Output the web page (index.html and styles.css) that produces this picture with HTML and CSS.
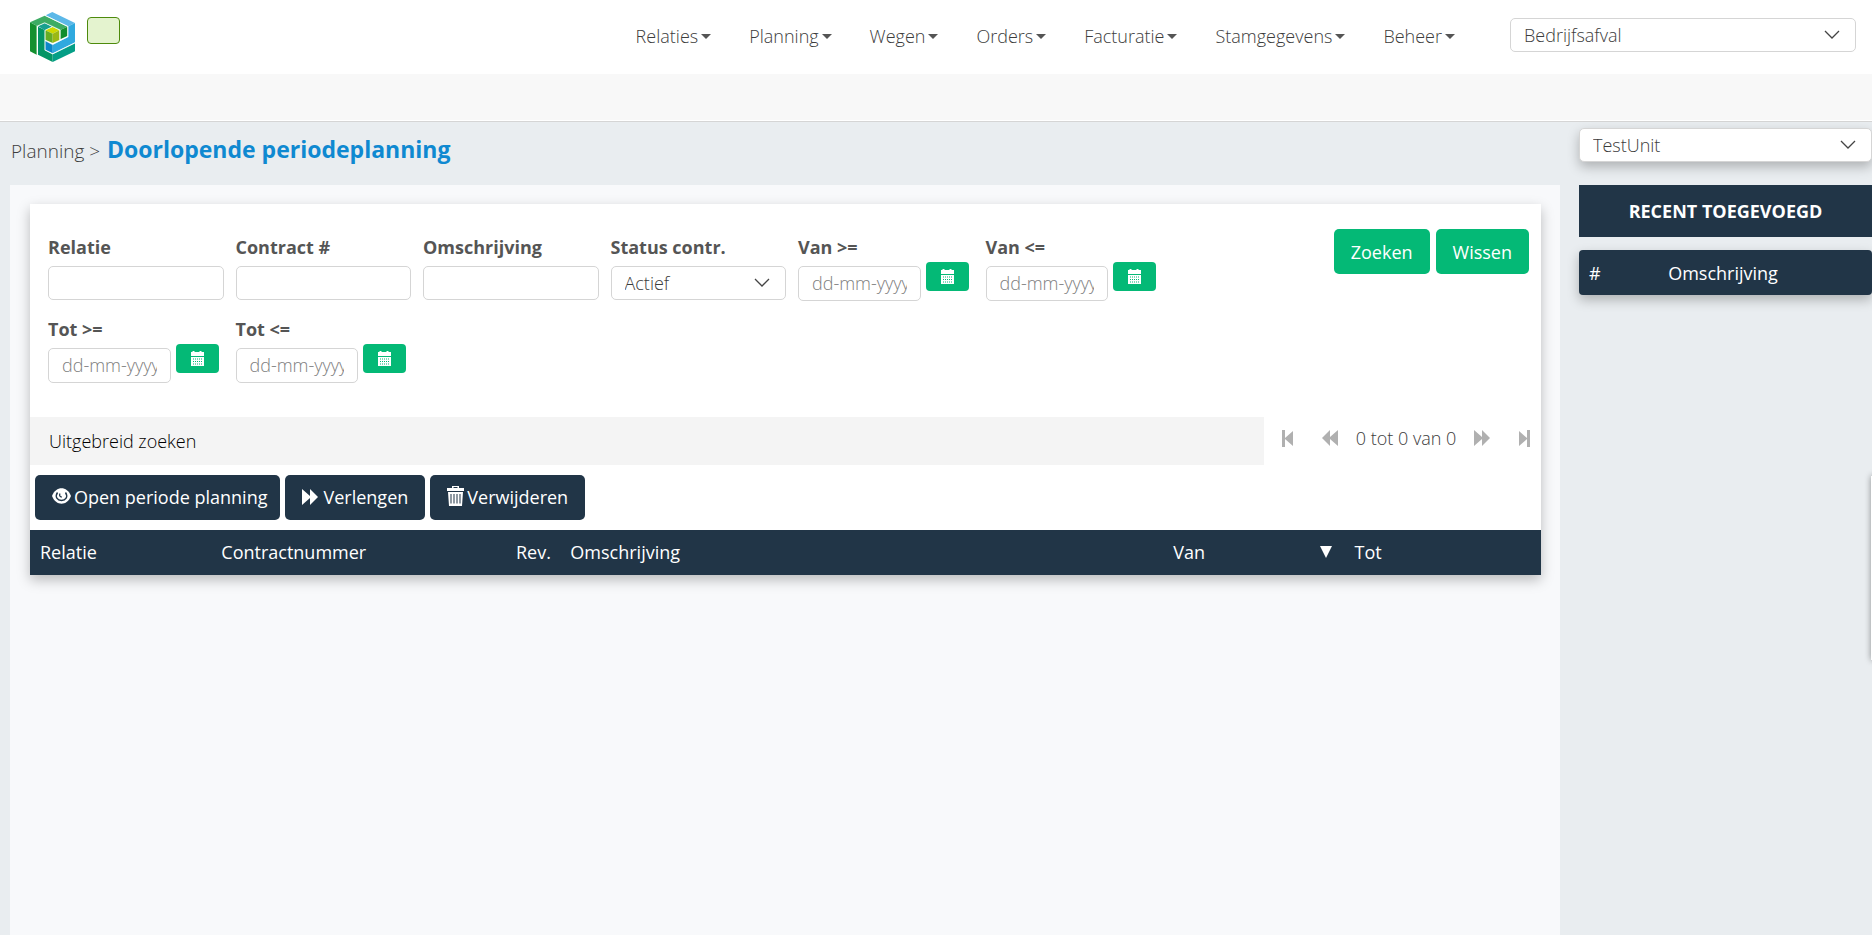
FILE: index.html
```html
<!DOCTYPE html>
<html lang="nl">
<head>
<meta charset="utf-8">
<title>Doorlopende periodeplanning</title>
<link rel="stylesheet" href="styles.css">
</head>
<body>
<svg class="sprite" aria-hidden="true">
  <symbol id="calendar" viewBox="0 0 13 15"><path fill="currentColor" fill-rule="evenodd" d="M0 1h1.500V0h2v1h5V0h2v1H13v4H0zM0 6h13v9H0zM2 7.500v1h1v-1zm2 0v1h1v-1zm2 0v1h1v-1zm2 0v1h1v-1zm2 0v1h1v-1zM2 10v1h1v-1zm2 0v1h1v-1zm2 0v1h1v-1zm2 0v1h1v-1zm2 0v1h1v-1zM2 12.500v1h1v-1zm2 0v1h1v-1zm2 0v1h1v-1zm2 0v1h1v-1zm2 0v1h1v-1z"/></symbol>
  <symbol id="forward" viewBox="0 0 16 16"><path fill="currentColor" d="M0 0l8 7V0l8 8-8 8V9l-8 7z"/></symbol>
  <symbol id="step" viewBox="0 0 11 17"><path fill="currentColor" d="M0 1l8 7V0h3v17H8V9l-8 7z"/></symbol>
</svg>
<header class="topbar">
  <a class="logo" href="#" aria-label="Home">
    <svg width="45" height="50" viewBox="90 36 135 150">
      <path fill="#14902f" d="M90 67l20 10v87l-20-10z"/>
      <path fill="#3dac64" d="M90 67l44-20 68 33-21 10-47-22-23 10z"/>
      <path fill="#118d2c" d="M181 90l21-10v28l-21 10z"/>
      <path fill="#5cb8e8" d="M137 46l20-10 68 33-20 10z"/>
      <path fill="#2fa9df" d="M205 79l20-10v58l-67 33v-26l47-23z"/>
      <path fill="#0d87c9" d="M136 122l22 12v26l-22-11z"/>
      <path fill="#049565" d="M114 80l20 10v61l24 12v23l-44-22z"/>
      <path fill="#18a08f" d="M114 79l20-9 22 10-22 11z"/>
      <path fill="#049e86" d="M158 163l67-33v24l-67 32z"/>
      <path fill="#ccd800" d="M136 91l22-10 20 10-20 10z"/>
      <path fill="#66ad24" d="M136 91l22 10v28l-22-10z"/>
      <path fill="#9bb814" d="M158 101l20-10v29l-20 9z"/>
      <path fill="none" stroke="#fff" stroke-opacity=".75" stroke-width="2" d="M112 164V78l22-10 47 22v28M135 46l68 33v31l-45 24-23-12M135 150V91l22-11M135 150l23 12 67-33"/>
    </svg>
  </a>
  <span class="status"></span>
  <nav class="menu">
    <button type="button">Relaties</button>
    <button type="button">Planning</button>
    <button type="button">Wegen</button>
    <button type="button">Orders</button>
    <button type="button">Facturatie</button>
    <button type="button">Stamgegevens</button>
    <button type="button">Beheer</button>
  </nav>
  <div class="select company">
    <select class="control" aria-label="Bedrijf"><option>Bedrijfsafval</option></select>
    <svg class="chevron" width="16" height="9" viewBox="0 0 16 9"><path d="M1 1l7 7 7-7"/></svg>
  </div>
</header>
<div class="subbar"></div>
<div class="page">
  <main class="content">
    <div class="crumbs"><a href="#">Planning</a> &gt; <h1>Doorlopende periodeplanning</h1></div>
    <div class="panel">
      <section class="card">
        <form class="search">
          <div class="fields">
            <div class="field"><label for="relatie">Relatie</label><input class="control" id="relatie" type="text"></div>
            <div class="field"><label for="contract">Contract #</label><input class="control" id="contract" type="text"></div>
            <div class="field"><label for="omschrijving">Omschrijving</label><input class="control" id="omschrijving" type="text"></div>
            <div class="field"><label for="status">Status contr.</label>
              <div class="select"><select class="control" id="status"><option>Actief</option></select><svg class="chevron" width="16" height="9" viewBox="0 0 16 9"><path d="M1 1l7 7 7-7"/></svg></div></div>
            <div class="field"><label for="van1">Van &gt;=</label><div class="date"><input class="control" id="van1" type="text" placeholder="dd-mm-yyyy"><button type="button" class="pick" aria-label="Kies datum"><svg width="13" height="15"><use href="#calendar"/></svg></button></div></div>
            <div class="field"><label for="van2">Van &lt;=</label><div class="date"><input class="control" id="van2" type="text" placeholder="dd-mm-yyyy"><button type="button" class="pick" aria-label="Kies datum"><svg width="13" height="15"><use href="#calendar"/></svg></button></div></div>
            <div class="field"><label for="tot1">Tot &gt;=</label><div class="date"><input class="control" id="tot1" type="text" placeholder="dd-mm-yyyy"><button type="button" class="pick" aria-label="Kies datum"><svg width="13" height="15"><use href="#calendar"/></svg></button></div></div>
            <div class="field"><label for="tot2">Tot &lt;=</label><div class="date"><input class="control" id="tot2" type="text" placeholder="dd-mm-yyyy"><button type="button" class="pick" aria-label="Kies datum"><svg width="13" height="15"><use href="#calendar"/></svg></button></div></div>
          </div>
          <div class="submit">
            <button type="button" class="btn green">Zoeken</button>
            <button type="button" class="btn green">Wissen</button>
          </div>
        </form>
        <div class="extra">
          <button type="button" class="extended">Uitgebreid zoeken</button>
          <div class="pager">
            <button type="button" class="outer" aria-label="Eerste"><svg class="flip" width="11" height="17"><use href="#step"/></svg></button>
            <button type="button" aria-label="Vorige"><svg class="flip" width="16" height="16"><use href="#forward"/></svg></button>
            <span>0 tot 0 van 0</span>
            <button type="button" aria-label="Volgende"><svg width="16" height="16"><use href="#forward"/></svg></button>
            <button type="button" class="outer" aria-label="Laatste"><svg width="11" height="17"><use href="#step"/></svg></button>
          </div>
        </div>
        <div class="actions">
          <button type="button" class="btn dark open"><svg width="19" height="16" viewBox="0 0 19 16"><path fill="currentColor" d="M0 8C4-2.300 15-2.300 19 8 15 18.300 4 18.300 0 8z"/><path fill="none" stroke="#213547" stroke-width="1.400" d="M5.500 4.500C2.500 9 5.500 12.500 9.500 12.500s7-3.500 4-8"/><path fill="none" stroke="#213547" stroke-width="1.300" d="M8 5.500c-1 2 0 3.500 1.800 3.500"/></svg>Open periode planning</button>
          <button type="button" class="btn dark"><svg class="wide" width="16" height="16"><use href="#forward"/></svg>Verlengen</button>
          <button type="button" class="btn dark"><svg width="17" height="20" viewBox="0 0 17 20"><path fill="currentColor" fill-rule="evenodd" d="M5 2V0h7v2h5v3H0V2zm1.500 0h4V1h-4zM1 6h15l-1 14H2zM3.500 8v9.500h1V8zm3 0v9.500h1V8zm3 0v9.500h1V8zm3 0v9.500h1V8z"/></svg>Verwijderen</button>
        </div>
        <table class="results">
          <colgroup><col class="c-rel"><col class="c-con"><col class="c-rev"><col class="c-oms"><col class="c-van"><col class="c-tot"></colgroup>
          <thead><tr><th>Relatie</th><th>Contractnummer</th><th>Rev.</th><th>Omschrijving</th><th><div class="sorted">Van<svg width="12" height="12" viewBox="0 0 12 12"><path fill="currentColor" d="M0 0h12L6 12z"/></svg></div></th><th>Tot</th></tr></thead>
        </table>
      </section>
    </div>
  </main>
  <aside class="side">
    <div class="select unit">
      <select class="control" aria-label="Unit"><option>TestUnit</option></select>
      <svg class="chevron" width="16" height="9" viewBox="0 0 16 9"><path d="M1 1l7 7 7-7"/></svg>
    </div>
    <h2>RECENT TOEGEVOEGD</h2>
    <table class="recent"><thead><tr><th class="num">#</th><th class="desc">Omschrijving</th></tr></thead></table>
  </aside>
</div>
<div class="drawer"></div>
</body>
</html>
```

FILE: styles.css
```css
* { box-sizing: border-box; }
body {
  margin: 0;
  min-height: 100vh;
  display: flex;
  flex-direction: column;
  overflow: hidden;
  background: #e9edf0;
  color: #3c3c3c;
  font: 300 18px/24px "Open Sans", sans-serif;
}
button, input, select { font: inherit; color: inherit; margin: 0; }
button { border: 0; background: none; padding: 0; white-space: nowrap; cursor: pointer; }
svg { display: block; flex: none; }
.sprite { position: absolute; width: 0; height: 0; }

.topbar { display: flex; align-items: flex-start; height: 74px; padding: 0 16px 0 30px; background: #fff; }
.logo { margin-top: 12px; }
.status { width: 33px; height: 27px; margin: 17px 0 0 12px; border: 1px solid #4d8a0c; border-radius: 4px; background: #e4f3cf; }
.menu { display: flex; gap: 38px; margin: 24px 55px 0 auto; }
.menu button { display: flex; align-items: center; gap: 3px; }
.menu button::after { content: ""; border: 5px solid transparent; border-top-color: #555; border-bottom: 0; }
.company { width: 346px; margin-top: 18px; }
.subbar { height: 48px; background: #f8f8f8; border-bottom: 1px solid #d5d5d5; box-shadow: inset 0 -1px #fff; }

.control {
  display: block;
  width: 100%;
  height: 34px;
  padding: 0 13px;
  border: 1px solid #d5d5d5;
  border-radius: 5px;
  background: #fff;
  appearance: none;
}
.control::placeholder { color: #808080; opacity: 1; }
.select { position: relative; }
.chevron { position: absolute; right: 16px; top: 12px; fill: none; stroke: #444; stroke-width: 1.3; pointer-events: none; }

.page { flex: 1; display: flex; }
.content { flex: 1; min-width: 0; display: flex; flex-direction: column; padding-left: 10px; }
.crumbs { height: 63px; padding: 12px 0 0 1px; font-size: 19px; line-height: 30px; }
.crumbs a { color: inherit; text-decoration: none; }
.crumbs h1 { display: inline; margin: 0 0 0 2px; font-size: 23px; font-weight: 700; color: #0f89d1; }
.panel { flex: 1; padding: 19px 19px 19px 20px; background: #f8f9fb; }
.card { background: #fff; box-shadow: 0 5px 12px rgba(0, 0, 0, .25); }
.search { display: flex; justify-content: space-between; align-items: flex-start; padding: 25px 12px 36px 18px; }
.fields { display: grid; grid-template-columns: repeat(6, minmax(0, 1fr)); gap: 12px; flex: 0 1 1113px; }
.field { height: 70px; padding-top: 6px; }
.field label { display: block; margin-bottom: 7px; color: #555; font-weight: 700; }
.date { display: flex; align-items: flex-start; gap: 5px; }
.date .control { flex: 1; min-width: 0; height: 35px; padding-bottom: 2px; }
.pick { display: grid; place-items: center; width: 43px; height: 29px; margin: -4px 5px 0 0; border-radius: 4px; background: #04b976; color: #fff; }
.submit, .actions { display: flex; gap: 6px; }
.btn { display: flex; align-items: center; height: 45px; padding: 0 17px 2px; border-radius: 5px; color: #fff; font-weight: 400; }
.green { padding-bottom: 0; background: #04b976; }
.dark { background: #213547; }
.open { padding-right: 13px; }

.extra { display: flex; }
.extended { width: 1234px; flex: 0 1 auto; height: 48px; padding-left: 19px; text-align: left; background: #f4f4f4; color: #000; }
.pager { flex: 1; display: flex; align-items: center; justify-content: center; gap: 18px; height: 42px; white-space: nowrap; padding-left: 7px; }
.pager button { color: #b0b0b0; }
.outer:first-child { margin-right: 11px; }
.outer:last-child { margin-left: 11px; }
.flip { transform: scaleX(-1); }
.actions { padding: 10px 5px; gap: 5px; }
.actions svg { margin: -2px 3px 0 0; }
.actions .wide { margin: 0 5px 0 0; }

table { width: 100%; border-collapse: collapse; table-layout: fixed; background: #213547; color: #fff; }
th { height: 45px; padding: 0 10px 1px; text-align: left; font-weight: 400; white-space: nowrap; }
.c-rel { width: 12%; }
.c-con { width: 19.5%; }
.c-rev { width: 3.6%; }
.c-oms { width: 39.9%; }
.c-van { width: 12%; }
.sorted { display: flex; align-items: center; justify-content: space-between; padding-right: 3px; }

.side { width: 312px; padding: 6px 0 0 19px; }
.unit .control { box-shadow: 0 5px 12px rgba(0, 0, 0, .25); }
.side h2 { margin: 23px 0 13px; background: #213547; color: #fff; font-size: 18px; line-height: 52px; font-weight: 700; text-align: center; }
.recent { border-radius: 4px; box-shadow: 0 5px 12px rgba(0, 0, 0, .25); }
.recent th { padding-bottom: 0; text-align: center; }
.recent .num { width: 31px; }
.recent .desc { padding-right: 46px; }
.drawer { position: fixed; right: -9px; top: 476px; width: 10px; height: 184px; background: #fff; box-shadow: 0 0 6px rgba(0, 0, 0, .4); }
```
